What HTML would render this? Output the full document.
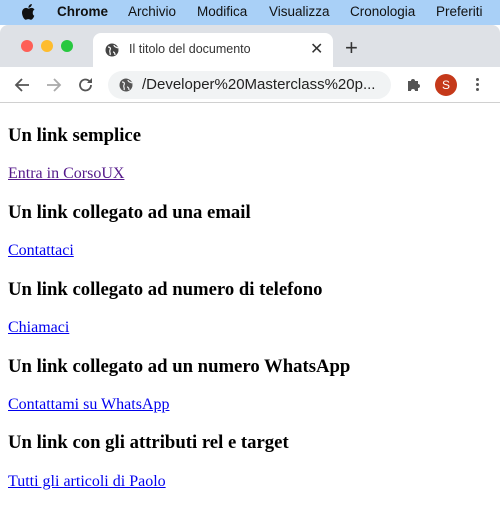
<!DOCTYPE html>
<html><head><meta charset="utf-8"><style>
*{box-sizing:border-box}
html,body{margin:0;padding:0;width:500px;height:515px;overflow:hidden;background:#fff}
.menubar{position:absolute;left:0;top:0;width:500px;height:25px;background:#a9d0f7;font-family:"Liberation Sans",sans-serif;font-size:13.5px;color:#111}
.menubar span{position:absolute;top:4px}
.tabs{position:absolute;left:0;top:25px;width:500px;height:42px;background:#dee1e6;border-radius:8px 8px 0 0}
.dot{position:absolute;top:15px;width:12px;height:12px;border-radius:50%}
.tab{position:absolute;left:93px;top:8px;width:240px;height:34px;background:#fff;border-radius:8px 8px 0 0;font-family:"Liberation Sans",sans-serif;font-size:12.5px;color:#333}
.toolbar{position:absolute;left:0;top:67px;width:500px;height:36px;background:#fff;border-bottom:1px solid #d0d0d0}
.omni{position:absolute;left:108px;top:4px;width:283px;height:28px;background:#f1f3f4;border-radius:14px;font-family:"Liberation Sans",sans-serif;font-size:15px;color:#222}
.content{position:absolute;left:0;top:106px;width:500px;padding:0 8px;font-family:"Liberation Serif",serif}
h3{font-size:18.72px;margin:18.72px 0;line-height:21.5px}
p{font-size:16px;margin:16px 0;line-height:18px}
a{color:#0000ee}
a.v{color:#551a8b}
</style></head><body>
<div class="menubar">
<svg style="position:absolute;left:22px;top:4px" width="13" height="16" viewBox="0 0 13 16"><path d="M10.8 8.5c0-2 1.6-2.9 1.7-3-1-1.4-2.4-1.6-2.9-1.6-1.2-.1-2.4.7-3 .7s-1.6-.7-2.6-.7C2.600 4 0 5.200 0 8.800c0 2.400 1.800 6.900 3.700 6.900.9 0 1.400-.6 2.600-.6s1.500.6 2.600.6c1.900 0 3.100-3.300 3.400-4-1.900-.8-1.500-3.200-1.500-3.200zM8.900 2.600C9.500 1.900 9.900 1 9.800 0c-.9 0-1.900.6-2.500 1.300-.5.600-1 1.500-.9 2.400 1 .1 1.900-.5 2.500-1.100z" fill="#111"/></svg>
<span style="left:57px;font-weight:bold">Chrome</span>
<span style="left:128px">Archivio</span>
<span style="left:197px">Modifica</span>
<span style="left:269px">Visualizza</span>
<span style="left:350px">Cronologia</span>
<span style="left:436px">Preferiti</span>
</div>
<div class="tabs">
<div class="dot" style="left:21px;background:#fe5f57"></div>
<div class="dot" style="left:41px;background:#febc2e"></div>
<div class="dot" style="left:61px;background:#28c840"></div>
<div class="tab">
<svg style="position:absolute;left:12px;top:10px" width="14" height="14" viewBox="0 0 14 14"><circle cx="7" cy="7" r="6.5" fill="#444"/><path d="M3 4c2 0 3 1 2 3s1 3 0 5M9 2c0 2 2 2 4 3M8 9c1 0 2 1 2 3" stroke="#fff" stroke-width="1.2" fill="none"/></svg>
<span style="position:absolute;left:36px;top:9px">Il titolo del documento</span>
<span style="position:absolute;left:217px;top:6px;font-size:16px">✕</span>
</div>
<span style="position:absolute;left:345px;top:10px;font-family:'Liberation Sans',sans-serif;font-size:22px;color:#333">+</span>
</div>
<div class="toolbar">
<svg style="position:absolute;left:14px;top:10px" width="16" height="16" viewBox="0 0 16 16"><path d="M15 8H2M8 2L2 8l6 6" stroke="#555" stroke-width="1.8" fill="none"/></svg>
<svg style="position:absolute;left:46px;top:10px" width="16" height="16" viewBox="0 0 16 16"><path d="M1 8h13M8 2l6 6-6 6" stroke="#aaa" stroke-width="1.8" fill="none"/></svg>
<svg style="position:absolute;left:78px;top:10px" width="16" height="16" viewBox="0 0 16 16"><path d="M13 8a5.500 5.500 0 1 1-1.600-3.900" stroke="#555" stroke-width="1.8" fill="none"/><path d="M14 1v5H9z" fill="#555"/></svg>
<div class="omni">
<svg style="position:absolute;left:11px;top:7px" width="14" height="14" viewBox="0 0 14 14"><circle cx="7" cy="7" r="6.5" fill="#555"/><path d="M3 4c2 0 3 1 2 3s1 3 0 5M9 2c0 2 2 2 4 3M8 9c1 0 2 1 2 3" stroke="#f1f3f4" stroke-width="1.2" fill="none"/></svg>
<span style="position:absolute;left:34px;top:5px">/Developer%20Masterclass%20p...</span>
</div>
<svg style="position:absolute;left:406px;top:9px" width="16" height="17" viewBox="0 0 16 17"><path d="M2 5h3a2 2 0 1 1 4 0h3v3a2 2 0 1 1 0 4v3H9a2 2 0 1 0-4 0H2z" fill="#555"/></svg>
<div style="position:absolute;left:435px;top:7px;width:22px;height:22px;border-radius:50%;background:#c5391a;color:#fff;font-family:'Liberation Sans',sans-serif;font-size:12px;text-align:center;line-height:22px">S</div>
<div style="position:absolute;left:476px;top:11px;width:3px;height:3px;border-radius:50%;background:#555;box-shadow:0 5px 0 #555,0 10px 0 #555"></div>
</div>
<div class="content">
<h3>Un link semplice</h3>
<p><a class="v" href="#">Entra in CorsoUX</a></p>
<h3>Un link collegato ad una email</h3>
<p><a href="#">Contattaci</a></p>
<h3>Un link collegato ad numero di telefono</h3>
<p><a href="#">Chiamaci</a></p>
<h3>Un link collegato ad un numero WhatsApp</h3>
<p><a href="#">Contattami su WhatsApp</a></p>
<h3>Un link con gli attributi rel e target</h3>
<p><a href="#">Tutti gli articoli di Paolo</a></p>
</div>
</body></html>
